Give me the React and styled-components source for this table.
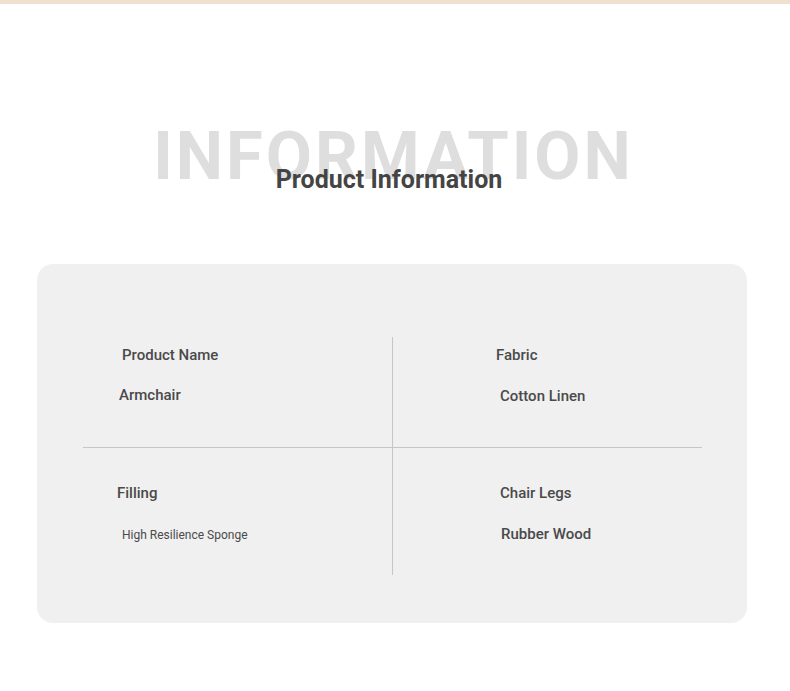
import React from "react";
import styled, { createGlobalStyle } from "styled-components";

const GlobalStyle = createGlobalStyle`
  html, body {
    margin: 0;
    padding: 0;
    background: #ffffff;
    font-family: Roboto, "Liberation Sans", sans-serif;
  }
`;

const Page = styled.div`
  width: 790px;
  min-height: 691px;
  border-top: 4px solid #efe0cf;
  box-sizing: border-box;
`;

const Heading = styled.header`
  display: grid;
  justify-items: center;
  padding-top: 119px;
  height: 141px;
`;

const BigWord = styled.div`
  grid-area: 1 / 1;
  font-size: 67px;
  line-height: 1;
  font-weight: 700;
  letter-spacing: 3px;
  color: #dedede;
  padding-left: 3px;
  margin-left: -6px;
`;

const Title = styled.h2`
  grid-area: 1 / 1;
  margin: 42px 0 0 -12px;
  font-size: 25px;
  line-height: 30px;
  font-weight: 700;
  color: #444444;
`;

const Card = styled.section`
  margin: 0 43px 0 37px;
  background: #f0f0f0;
  border-radius: 16px;
  padding: 73px 45px 48px 46px;
`;

const Grid = styled.div`
  display: grid;
  grid-template-columns: 310px 309px;
  grid-template-rows: 111px 127px;
`;

const Cell = styled.div`
  display: flex;
  flex-direction: column;
  padding-top: ${(p) => p.$top}px;
  padding-left: ${(p) => p.$left}px;
  border-right: ${(p) => (p.$divider ? "1px solid #c6c6c6" : "none")};
  border-bottom: ${(p) => (p.$underline ? "1px solid #c6c6c6" : "none")};
  box-sizing: border-box;
`;

const Label = styled.span`
  font-size: 15px;
  line-height: 20px;
  font-weight: 500;
  color: #4a4a4a;
  margin-left: ${(p) => p.$indent || 0}px;
`;

const Value = styled.span`
  font-size: ${(p) => (p.$small ? 12 : 15)}px;
  line-height: 20px;
  font-weight: ${(p) => (p.$small ? 400 : 500)};
  color: #4a4a4a;
  margin-top: ${(p) => p.$gap}px;
  margin-left: ${(p) => p.$indent || 0}px;
`;

const specs = [
  { label: "Product Name", value: "Armchair", top: 8, left: 39, vi: -3, gap: 20, divider: true, underline: true },
  { label: "Fabric", value: "Cotton Linen", top: 8, left: 103, vi: 4, gap: 21, underline: true },
  { label: "Filling", value: "High Resilience Sponge", top: 35, left: 34, vi: 5, gap: 22, divider: true, small: true },
  { label: "Chair Legs", value: "Rubber Wood", top: 35, left: 107, vi: 1, gap: 21 },
];

const App = () => {
  return (
    <>
      <GlobalStyle />
      <Page>
        <Heading>
          <BigWord>INFORMATION</BigWord>
          <Title>Product Information</Title>
        </Heading>
        <Card>
          <Grid>
            {specs.map((s) => (
              <Cell
                key={s.label}
                $top={s.top}
                $left={s.left}
                $divider={s.divider}
                $underline={s.underline}
              >
                <Label>{s.label}</Label>
                <Value $indent={s.vi} $gap={s.gap} $small={s.small}>
                  {s.value}
                </Value>
              </Cell>
            ))}
          </Grid>
        </Card>
      </Page>
    </>
  );
};

export default App;
